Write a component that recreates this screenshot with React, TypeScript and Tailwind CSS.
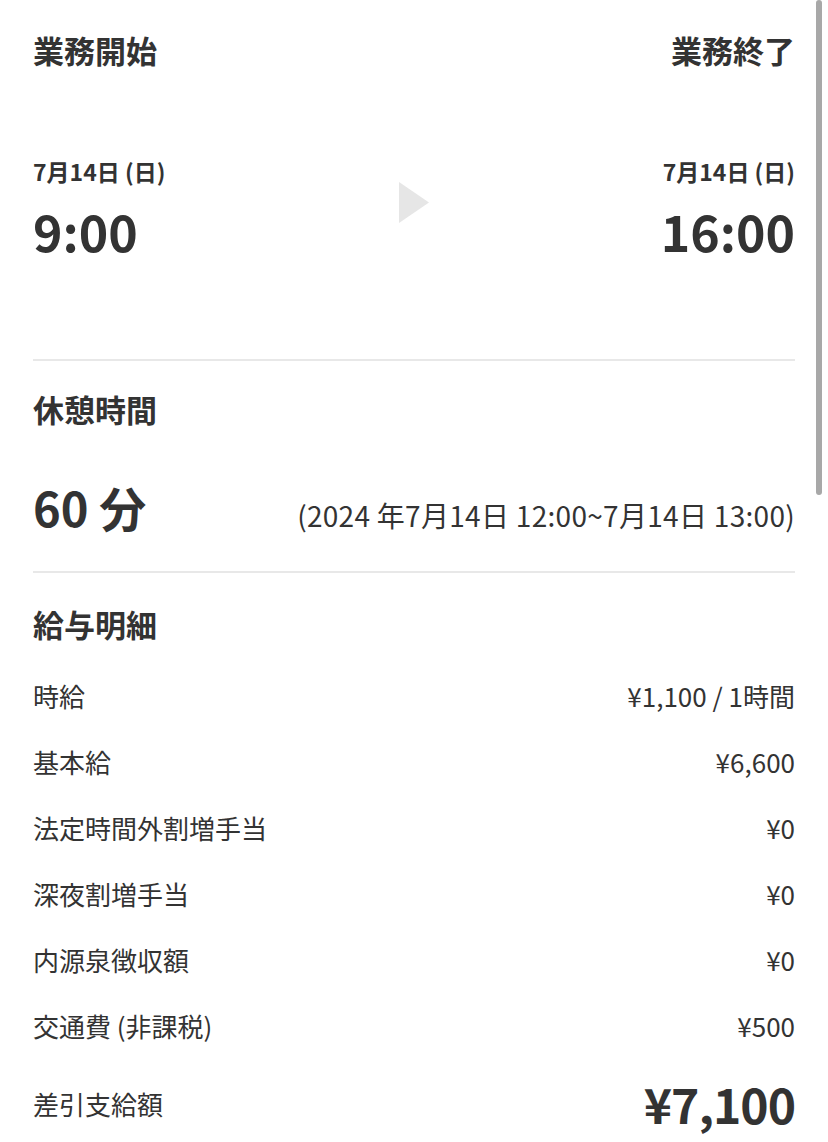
const font = "font-['Noto_Sans_CJK_JP',sans-serif]";

const rows = [
  { label: "時給", value: "¥1,100 / 1時間" },
  { label: "基本給", value: "¥6,600" },
  { label: "法定時間外割増手当", value: "¥0" },
  { label: "深夜割増手当", value: "¥0" },
  { label: "内源泉徴収額", value: "¥0" },
  { label: "交通費 (非課税)", value: "¥500" },
];

const App = () => {
  return (
    <div className={`relative w-[828px] h-[1142px] overflow-hidden bg-white text-[#333333] ${font}`}>
      {/* scroll indicator */}
      <div className="absolute right-[6px] top-0 w-[6px] h-[495px] rounded-full bg-[#a8a8a8]" />

      <div className="px-[33px]">
        {/* work start / end */}
        <section className="pt-[30px] pb-[104px] border-b-2 border-[#e8e8e8]">
          <div className="flex justify-between">
            <h2 className="text-[31px] font-bold leading-[40px]">業務開始</h2>
            <h2 className="text-[31px] font-bold leading-[40px]">業務終了</h2>
          </div>
          <div className="mt-[85px] grid grid-cols-[1fr_auto_1fr] items-start">
            <div>
              <div className="text-[23px] font-bold leading-[32px]">7月14日 (日)</div>
              <div className="mt-[18px] text-[50px] font-bold leading-[50px]">9:00</div>
            </div>
            <svg width="30" height="41" viewBox="0 0 30 41" className="mt-[27px]">
              <polygon points="0,0 30,20.5 0,41" fill="#e6e6e6" />
            </svg>
            <div className="text-right">
              <div className="text-[23px] font-bold leading-[32px]">7月14日 (日)</div>
              <div className="mt-[18px] text-[50px] font-bold leading-[50px]">16:00</div>
            </div>
          </div>
        </section>

        {/* break */}
        <section className="pt-[28px] pb-[34px] border-b-2 border-[#e8e8e8]">
          <h2 className="text-[31px] font-bold leading-[40px]">休憩時間</h2>
          <div className="mt-[48px] flex justify-between items-baseline">
            <div className="text-[47px] font-bold leading-[60px]">60 分</div>
            <div className="text-[28px] leading-[34px] tracking-[0.3px]">(2024 年7月14日 12:00~7月14日 13:00)</div>
          </div>
        </section>

        {/* pay details */}
        <section className="pt-[31px]">
          <h2 className="text-[31px] font-bold leading-[40px]">給与明細</h2>
          <div className="mt-[18px] flex flex-col">
            {rows.map((row) => (
              <div key={row.label} className="flex justify-between items-center h-[66px] text-[26px]">
                <span>{row.label}</span>
                <span>{row.value}</span>
              </div>
            ))}
            <div className="mt-[15px] flex justify-between items-center h-[60px]">
              <span className="text-[26px]">差引支給額</span>
              <span className="text-[48px] font-bold tracking-[-1px] leading-[60px]">¥7,100</span>
            </div>
          </div>
        </section>
      </div>
    </div>
  );
};

export default App;
